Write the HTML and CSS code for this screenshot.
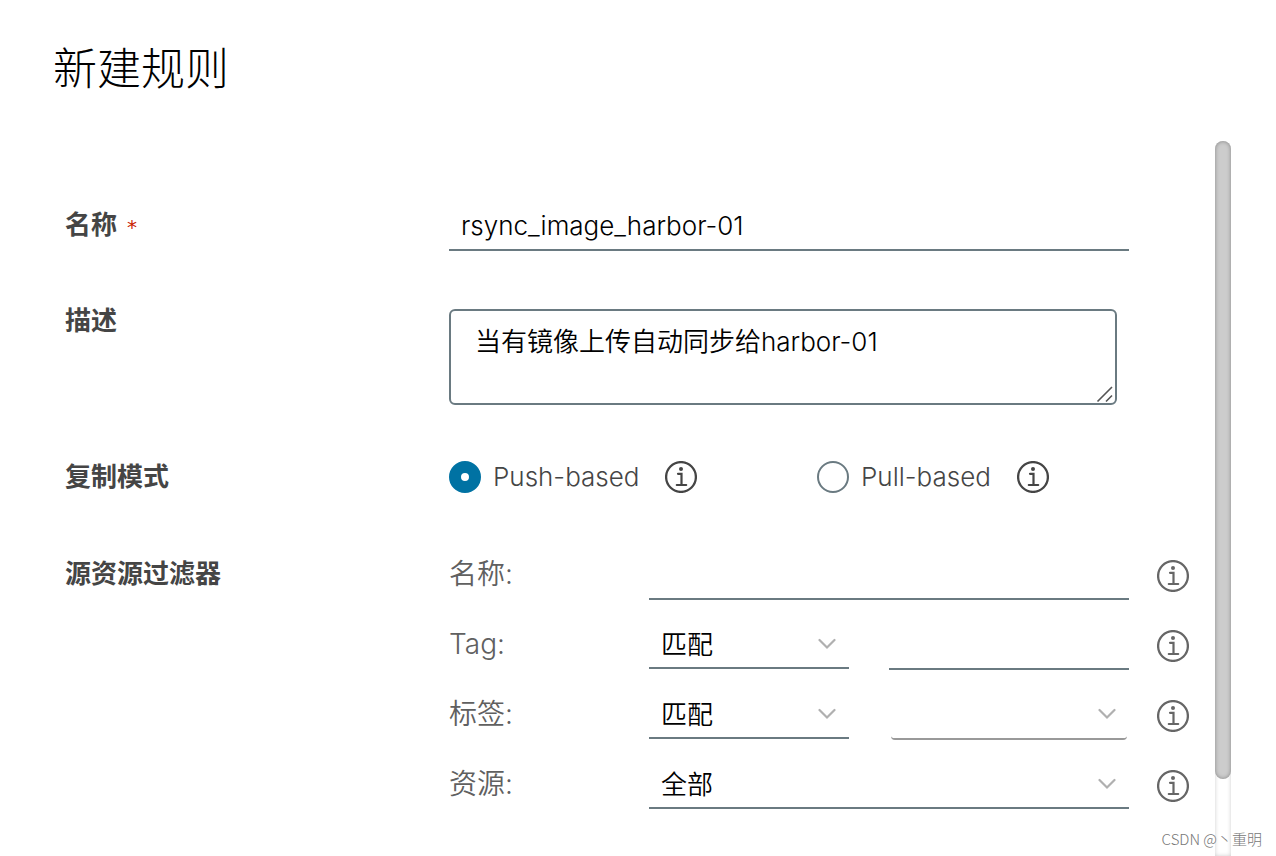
FILE: index.html
```html
<!DOCTYPE html>
<html lang="zh-CN">
<head>
<meta charset="utf-8">
<title>新建规则</title>
<link rel="stylesheet" href="styles.css">
</head>
<body>
<svg class="sprite" aria-hidden="true">
  <symbol id="info" viewBox="0 0 32 32">
    <circle cx="16" cy="16" r="14.9" fill="none" stroke="currentColor" stroke-width="2.3"/>
    <circle cx="16" cy="8" r="2" fill="currentColor"/>
    <path d="M13 12.8h3.500V24M11.800 24h9.400" fill="none" stroke="currentColor" stroke-width="2.200" stroke-linecap="round"/>
  </symbol>
  <symbol id="chevron" viewBox="0 0 18 12">
    <path d="M1.500 2L9 9.500L16.500 2" fill="none" stroke="currentColor" stroke-width="2.200" stroke-linecap="round"/>
  </symbol>
</svg>
<main class="dialog">
  <h1 class="title">新建规则</h1>
  <div class="body">
    <form class="form">
      <div class="row">
        <label class="row-label" for="name">名称<span class="required">*</span></label>
        <div class="row-content inset"><input class="text" id="name" type="text" value="rsync_image_harbor-01"></div>
      </div>
      <div class="row">
        <label class="row-label" for="desc">描述</label>
        <div class="row-content area">
          <textarea class="textarea" id="desc">当有镜像上传自动同步给harbor-01</textarea>
          <svg class="grip" viewBox="0 0 18 18" aria-hidden="true"><path d="M1.500 16.500L16 2M10 16.500L16 10.500" fill="none" stroke="#555" stroke-width="1.600"/></svg>
        </div>
      </div>
      <div class="row mode-row">
        <span class="row-label" id="mode">复制模式</span>
        <div class="row-content modes" role="radiogroup" aria-labelledby="mode">
          <div class="mode">
            <input class="radio" type="radio" name="mode" id="push" checked>
            <label for="push">Push-based</label>
            <button class="info" type="button" aria-label="Push-based"><svg><use href="#info"/></svg></button>
          </div>
          <div class="mode">
            <input class="radio" type="radio" name="mode" id="pull">
            <label for="pull">Pull-based</label>
            <button class="info" type="button" aria-label="Pull-based"><svg><use href="#info"/></svg></button>
          </div>
        </div>
      </div>
      <div class="row">
        <span class="row-label">源资源过滤器</span>
        <div class="row-content filters">
          <div class="filter">
            <label class="filter-label" for="f-name">名称:</label>
            <div class="fields"><input class="text" id="f-name" type="text"></div>
            <button class="info" type="button" aria-label="名称"><svg><use href="#info"/></svg></button>
          </div>
          <div class="filter">
            <label class="filter-label" for="f-tag">Tag:</label>
            <div class="fields">
              <div class="select short"><select id="f-tag"><option>匹配</option></select><svg class="chevron"><use href="#chevron"/></svg></div>
              <input class="text" type="text" aria-label="Tag">
            </div>
            <button class="info" type="button" aria-label="Tag"><svg><use href="#info"/></svg></button>
          </div>
          <div class="filter">
            <label class="filter-label" for="f-label">标签:</label>
            <div class="fields">
              <div class="select short"><select id="f-label"><option>匹配</option></select><svg class="chevron"><use href="#chevron"/></svg></div>
              <div class="select muted"><select aria-label="标签"><option></option></select><svg class="chevron"><use href="#chevron"/></svg></div>
            </div>
            <button class="info" type="button" aria-label="标签"><svg><use href="#info"/></svg></button>
          </div>
          <div class="filter">
            <label class="filter-label" for="f-res">资源:</label>
            <div class="fields">
              <div class="select"><select id="f-res"><option>全部</option></select><svg class="chevron"><use href="#chevron"/></svg></div>
            </div>
            <button class="info" type="button" aria-label="资源"><svg><use href="#info"/></svg></button>
          </div>
        </div>
      </div>
    </form>
    <div class="track" aria-hidden="true"><div class="thumb"></div></div>
  </div>
</main>
<div class="watermark">CSDN @丶重明</div>
</body>
</html>
```
FILE: styles.css
```css
* { box-sizing: border-box; }

body {
  margin: 0;
  background: #fff;
  color: #454545;
  font: 350 26px/32px Inter, "Noto Sans CJK SC", sans-serif;
}

input, textarea, select, button { font: inherit; color: #000; margin: 0; }

.sprite { position: absolute; width: 0; height: 0; }

.dialog { display: flex; flex-direction: column; min-height: 100vh; }

.title {
  margin: 0;
  padding: 34px 53px 43px;
  font: 300 44px/64px "Noto Sans CJK SC", sans-serif;
  color: #000;
}

.body { display: flex; flex: 1; gap: 26px; padding: 0 45px 0 65px; }

.form { display: flex; flex: 1; flex-direction: column; gap: 46px; padding-top: 60px; min-width: 0; }

.row { display: grid; grid-template-columns: 384px minmax(0, 1fr); }

.row-label { font-weight: 700; line-height: 48px; }
.required { margin-left: 10px; color: #c92100; font: 20px/20px "DejaVu Sans", sans-serif; }

.inset { padding-right: 60px; }

.text {
  width: 100%;
  height: 50px;
  min-width: 0;
  padding: 0 12px;
  border: 0;
  border-bottom: 2px solid #6a7a81;
  background: none;
}

.area { position: relative; margin-right: 72px; padding-top: 12px; }
.textarea {
  display: block;
  width: 100%;
  height: 96px;
  padding: 15px 24px;
  border: 2px solid #6a7a81;
  border-radius: 6px;
  background: none;
  resize: none;
  overflow: hidden;
}
.grip { position: absolute; right: 3px; bottom: 2px; width: 18px; height: 18px; }

.mode-row { align-items: center; min-height: 53px; padding-bottom: 2px; }
.modes { display: grid; grid-template-columns: 1fr 1fr; margin-right: 4px; }
.mode { display: flex; align-items: center; gap: 12px; }
.mode .info { margin-left: 14px; color: #454545; }

.radio {
  appearance: none;
  width: 32px;
  height: 32px;
  border: 2px solid #6a7a81;
  border-radius: 50%;
  background: #fff;
}
.radio:checked { border: 12px solid #0072a3; }

.info { padding: 0; border: 0; background: none; color: #666; }
.info svg { display: block; width: 32px; height: 32px; overflow: visible; }

.filters { display: flex; flex-direction: column; gap: 20px; }
.filter { display: grid; grid-template-columns: 200px minmax(0, 1fr) 32px; height: 50px; }
.filter .info { align-self: center; margin-top: 2px; }
.filter-label { font-size: 28px; line-height: 48px; color: #606060; }
.fields { display: flex; align-items: flex-start; gap: 40px; margin-right: 28px; }

.select { position: relative; flex: 1; min-width: 0; }
.select.short { flex: 0 0 200px; }
.select select {
  display: block;
  appearance: none;
  width: 100%;
  height: 49px;
  padding: 2px 12px 0;
  border: 0;
  border-bottom: 2px solid #6a7a81;
  border-radius: 0;
  background: none;
}
.select.muted { margin: 0 2px; }
.select.muted select { height: 50px; border-color: #999; border-radius: 4px; }
.chevron { position: absolute; right: 13px; top: 18px; width: 18px; height: 12px; color: #b0b0b0; pointer-events: none; }
.muted .chevron { right: 11px; }

.track { width: 16px; box-shadow: inset 0 0 4px rgba(0, 0, 0, .2); border-radius: 8px 8px 0 0; }
.thumb { height: 89.2%; border-radius: 8px; background: #ccc; box-shadow: inset 0 0 4px rgba(0, 0, 0, .35); }

.watermark {
  position: absolute;
  right: 14px;
  bottom: 7px;
  font: 300 15px/20px "Noto Sans CJK SC", sans-serif;
  color: #777;
}
```
